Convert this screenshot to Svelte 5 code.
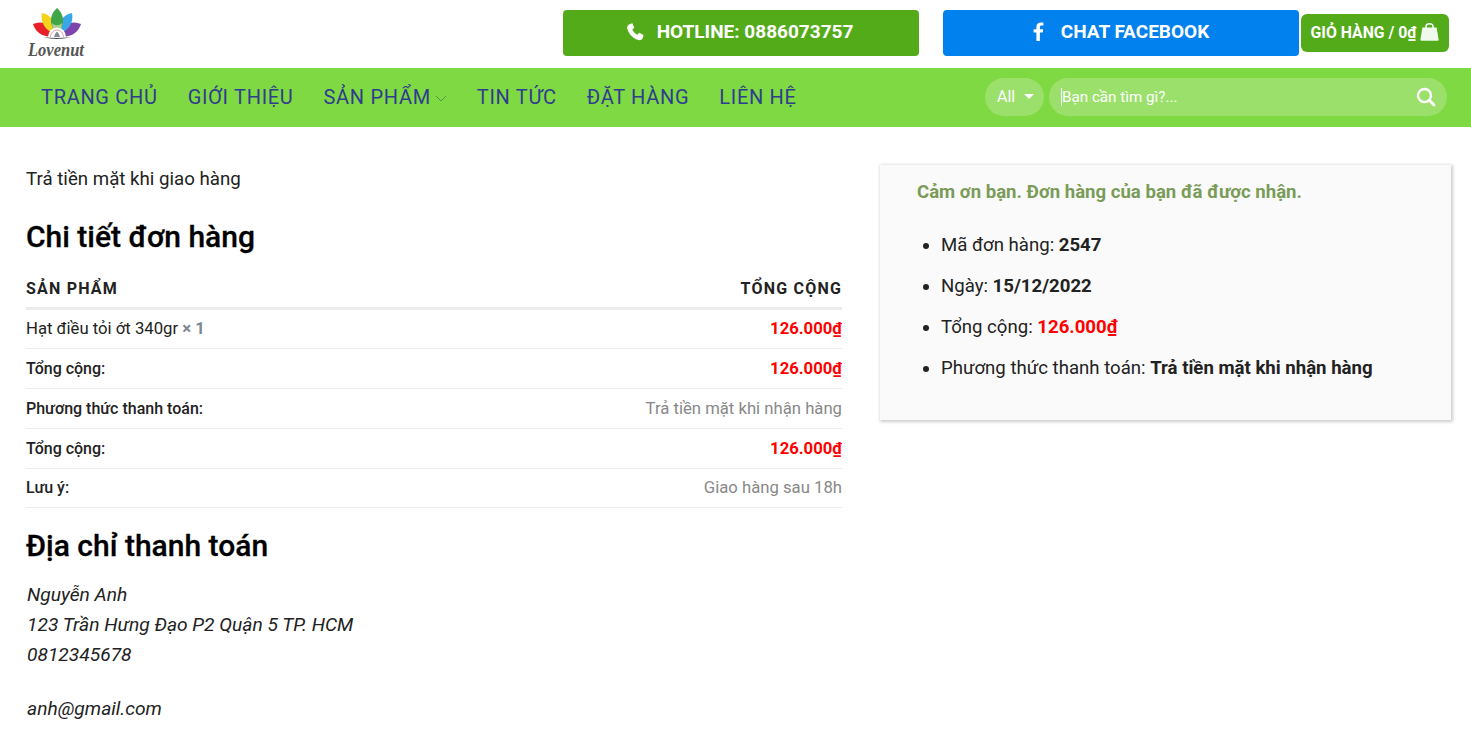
<script>
  let menu = [
    { label: "TRANG CHỦ" },
    { label: "GIỚI THIỆU" },
    { label: "SẢN PHẨM", sub: true },
    { label: "TIN TỨC" },
    { label: "ĐẶT HÀNG" },
    { label: "LIÊN HỆ" }
  ];
  let rows = [
    { name: "Tổng cộng:", value: "126.000₫", price: true },
    { name: "Phương thức thanh toán:", value: "Trả tiền mặt khi nhận hàng" },
    { name: "Tổng cộng:", value: "126.000₫", price: true },
    { name: "Lưu ý:", value: "Giao hàng sau 18h" }
  ];
</script>

<header class="top">
  <a class="logo" href="#home">
    <svg width="54" height="34" viewBox="0 0 54 34">
      <path d="M3 18 C12 14 22 18 25 30 C13 32 6 27 3 18Z" fill="#e8202a" />
      <path d="M51 18 C42 14 32 18 29 30 C41 32 48 27 51 18Z" fill="#7d45ab" />
      <path d="M12 7 C20 8 26 15 26 28 C15 25 10 16 12 7Z" fill="#f6d21c" />
      <path d="M42 7 C34 8 28 15 28 28 C39 25 44 16 42 7Z" fill="#3aa8e6" />
      <path d="M27 2 C34 8 36 18 27 28 C18 18 20 8 27 2Z" fill="#3fa648" />
      <path d="M22 17 C25 20 29 20 32 17 L31 26 H23Z" fill="#a8d08d" />
      <path d="M18 31 A9 9.5 0 0 1 36 31Z" fill="#fff" />
      <path d="M20.5 31 A6.5 7 0 0 1 33.5 31" fill="none" stroke="#e8a0a0" stroke-width="1" />
      <path d="M24 31 Q27 21 30 31Z" fill="#8a8a9a" />
      <path d="M13 31 Q27 35 41 31 Q27 33 13 31Z" fill="#444" />
    </svg>
    <span class="logo-text">Lovenut</span>
  </a>
  <a class="call hotline" href="#hotline">
    <svg width="18" height="18" viewBox="0 0 18 18"><path d="M4.6 0.8 L6.4 0.3 L8.3 4.7 L6.3 6.5 C7 8.4 9 10.8 11.4 11.8 L13.2 9.8 L17.6 12 L17 14.2 C16.4 16.4 14.6 17.6 12.6 17.1 C7.4 15.8 2.4 10.6 1.2 5.4 C0.8 3.4 2.2 1.4 4.6 0.8Z" fill="#fff" /></svg>
    <span>HOTLINE: 0886073757</span>
  </a>
  <a class="call facebook" href="#facebook">
    <svg width="12" height="19" viewBox="0 0 12 19"><path d="M3.4 19 V10.6 H0.6 V7.3 H3.4 V4.9 C3.4 2 5.1 0.4 7.8 0.4 C9 0.4 10.1 0.5 10.4 0.5 V3.4 H8.6 C7.2 3.4 6.9 4.1 6.9 5.1 V7.3 H10.2 L9.8 10.6 H6.9 V19Z" fill="#fff" /></svg>
    <span>CHAT FACEBOOK</span>
  </a>
  <a class="cart" href="#cart">
    <span>GIỎ HÀNG / 0<u>₫</u></span>
    <svg width="19" height="18" viewBox="0 0 19 18">
      <path d="M6 5 V3.6 C6 1.9 7.4 0.8 9.5 0.8 C11.6 0.8 13 1.9 13 3.6 V5" fill="none" stroke="#fff" stroke-width="1.5" />
      <path d="M2.4 4.5 H16.6 L18.6 16.4 C18.7 17.3 18.2 17.8 17.3 17.8 H1.7 C0.8 17.8 0.3 17.3 0.4 16.4 Z" fill="#fff" opacity="0.92" />
    </svg>
  </a>
</header>

<nav class="bar">
  <ul class="menu">
    {#each menu as item}
      <li>
        <a href="#menu">{item.label}</a>
        {#if item.sub}
          <svg class="chev" width="12" height="7" viewBox="0 0 12 7"><path d="M1 1 L6 6 L11 1" fill="none" stroke="#5a8f4a" stroke-width="1" /></svg>
        {/if}
      </li>
    {/each}
  </ul>
  <form class="search">
    <div class="select">All <i class="caret"></i></div>
    <div class="field">
      <span class="placeholder">Bạn cần tìm gì?...</span>
      <svg width="20" height="20" viewBox="0 0 20 20"><circle cx="8.5" cy="8.5" r="6.5" fill="none" stroke="#fff" stroke-width="2.4" /><path d="M13.3 13.3 L18 18" stroke="#fff" stroke-width="2.8" stroke-linecap="round" /></svg>
    </div>
  </form>
</nav>

<main class="page">
  <section class="left">
    <p class="method">Trả tiền mặt khi giao hàng</p>
    <h2>Chi tiết đơn hàng</h2>
    <table>
      <thead>
        <tr><th>SẢN PHẨM</th><th class="right">TỔNG CỘNG</th></tr>
      </thead>
      <tbody>
        <tr>
          <td>Hạt điều tỏi ớt 340gr <b class="qty">× 1</b></td>
          <td class="right price">126.000<u>₫</u></td>
        </tr>
        {#each rows as row}
          <tr>
            <td class="name">{row.name}</td>
            {#if row.price}
              <td class="right price">126.000<u>₫</u></td>
            {:else}
              <td class="right muted">{row.value}</td>
            {/if}
          </tr>
        {/each}
      </tbody>
    </table>
    <h2 class="address-title">Địa chỉ thanh toán</h2>
    <address>
      Nguyễn Anh<br />
      123 Trần Hưng Đạo P2 Quận 5 TP. HCM<br />
      0812345678
      <span class="mail">anh@gmail.com</span>
    </address>
  </section>

  <aside class="box">
    <p class="thanks">Cảm ơn bạn. Đơn hàng của bạn đã được nhận.</p>
    <ul>
      <li>Mã đơn hàng: <b>2547</b></li>
      <li>Ngày: <b>15/12/2022</b></li>
      <li>Tổng cộng: <b class="red">126.000<u>₫</u></b></li>
      <li>Phương thức thanh toán: <b>Trả tiền mặt khi nhận hàng</b></li>
    </ul>
  </aside>
</main>

<style>
  :global(body) {
    margin: 0;
    font-family: Roboto, "Liberation Sans", sans-serif;
    color: #222;
    background: #fff;
    overflow: hidden;
  }

  a {
    text-decoration: none;
    color: inherit;
  }

  .top {
    display: flex;
    align-items: center;
    height: 68px;
    box-sizing: border-box;
    padding: 0 22px 2px 27px;
  }

  .logo {
    display: flex;
    flex-direction: column;
    align-items: center;
    width: 58px;
    height: 58px;
    margin-right: 478px;
  }

  .logo svg {
    margin: 2px 0 0 2px;
    flex: none;
  }

  .logo-text {
    font-family: "Liberation Serif", serif;
    font-style: italic;
    font-weight: 700;
    font-size: 16.5px;
    line-height: 20px;
    color: #555;
    transform: scaleY(1.2);
  }

  .call {
    display: flex;
    align-items: center;
    justify-content: center;
    gap: 13px;
    height: 46px;
    box-sizing: border-box;
    padding-bottom: 3px;
    border-radius: 4px;
    color: #fff;
    font-size: 19px;
    font-weight: 700;
  }

  .hotline {
    width: 356px;
    margin-right: 24px;
    padding-right: 3px;
    background: #53ab1a;
  }

  .facebook {
    width: 356px;
    margin-right: 2px;
    background: #0081ed;
    gap: 16px;
  }

  .cart {
    display: flex;
    align-items: center;
    justify-content: center;
    gap: 4px;
    width: 148px;
    height: 38px;
    box-sizing: border-box;
    padding-bottom: 2px;
    border-radius: 6px;
    background: #53ab1a;
    color: #fff;
    font-size: 15.8px;
    font-weight: 700;
  }

  .bar {
    display: flex;
    align-items: center;
    justify-content: space-between;
    height: 59px;
    box-sizing: border-box;
    padding: 0 24px 2px 41px;
    background: #7fd942;
  }

  .menu {
    display: flex;
    gap: 30px;
    margin: 0;
    padding: 0;
    list-style: none;
  }

  .menu li {
    display: flex;
    align-items: center;
    gap: 4px;
  }

  .menu a {
    color: #2f3c8f;
    font-size: 20px;
    letter-spacing: 0.7px;
  }

  .chev {
    margin-top: 4px;
  }

  .search {
    display: flex;
    gap: 5px;
    margin: 0;
  }

  .select {
    display: flex;
    align-items: center;
    gap: 9px;
    width: 59px;
    height: 38px;
    box-sizing: border-box;
    padding-left: 12px;
    border-radius: 19px;
    background: #9ce06c;
    color: #fff;
    font-size: 16px;
  }

  .caret {
    width: 0;
    height: 0;
    border-left: 5px solid transparent;
    border-right: 5px solid transparent;
    border-top: 5px solid #fff;
  }

  .field {
    display: flex;
    align-items: center;
    justify-content: space-between;
    width: 398px;
    height: 38px;
    box-sizing: border-box;
    padding: 0 11px 0 13px;
    border-radius: 19px;
    background: #9ce06c;
  }

  .placeholder {
    border-left: 1px solid #fff;
    margin-left: -1px;
    color: #fff;
    font-size: 15.2px;
  }

  .page {
    display: flex;
    align-items: flex-start;
    padding: 38px 20px 0 26px;
  }

  .left {
    width: 816px;
    margin-right: 38px;
  }

  .method {
    margin: 0;
    padding-top: 1px;
    font-size: 18.7px;
    line-height: 27px;
  }

  h2 {
    margin: 26px 0 0;
    color: #000;
    font-size: 30px;
    line-height: 36px;
    font-weight: 500;
    -webkit-text-stroke: 0.3px #000;
  }

  table {
    width: 100%;
    margin-top: 12px;
    border-collapse: collapse;
  }

  th {
    height: 35.5px;
    padding: 4px 0 0;
    border-bottom: 3px solid #ececec;
    text-align: left;
    font-size: 16px;
    font-weight: 700;
    letter-spacing: 1.2px;
  }

  td {
    height: 38.75px;
    padding: 0;
    border-bottom: 1px solid #ececec;
    font-size: 16.7px;
  }

  th.right,
  td.right {
    text-align: right;
  }

  .qty {
    color: #7a8794;
  }

  td.name {
    font-size: 16px;
    font-weight: 500;
  }

  .price {
    color: #f00;
    font-weight: 700;
  }

  .muted {
    color: #888;
  }

  .address-title {
    margin-top: 20px;
  }

  address {
    margin-top: 16px;
    padding-left: 1px;
    font-size: 19.2px;
    line-height: 30px;
  }

  .mail {
    display: block;
    margin-top: 24px;
  }

  .box {
    width: 571px;
    height: 255px;
    box-sizing: border-box;
    padding: 15px 37px 0;
    background: #fafafa;
    box-shadow: 1px 1px 3px 1px rgba(0, 0, 0, 0.2);
  }

  .thanks {
    margin: 0;
    color: #7a9c59;
    font-size: 18.6px;
    line-height: 24px;
    font-weight: 700;
  }

  .box ul {
    margin: 28px 0 0;
    padding-left: 24px;
  }

  .box li {
    margin-bottom: 14px;
    font-size: 18.6px;
    line-height: 27px;
  }

  .red {
    color: #f00;
  }
</style>
